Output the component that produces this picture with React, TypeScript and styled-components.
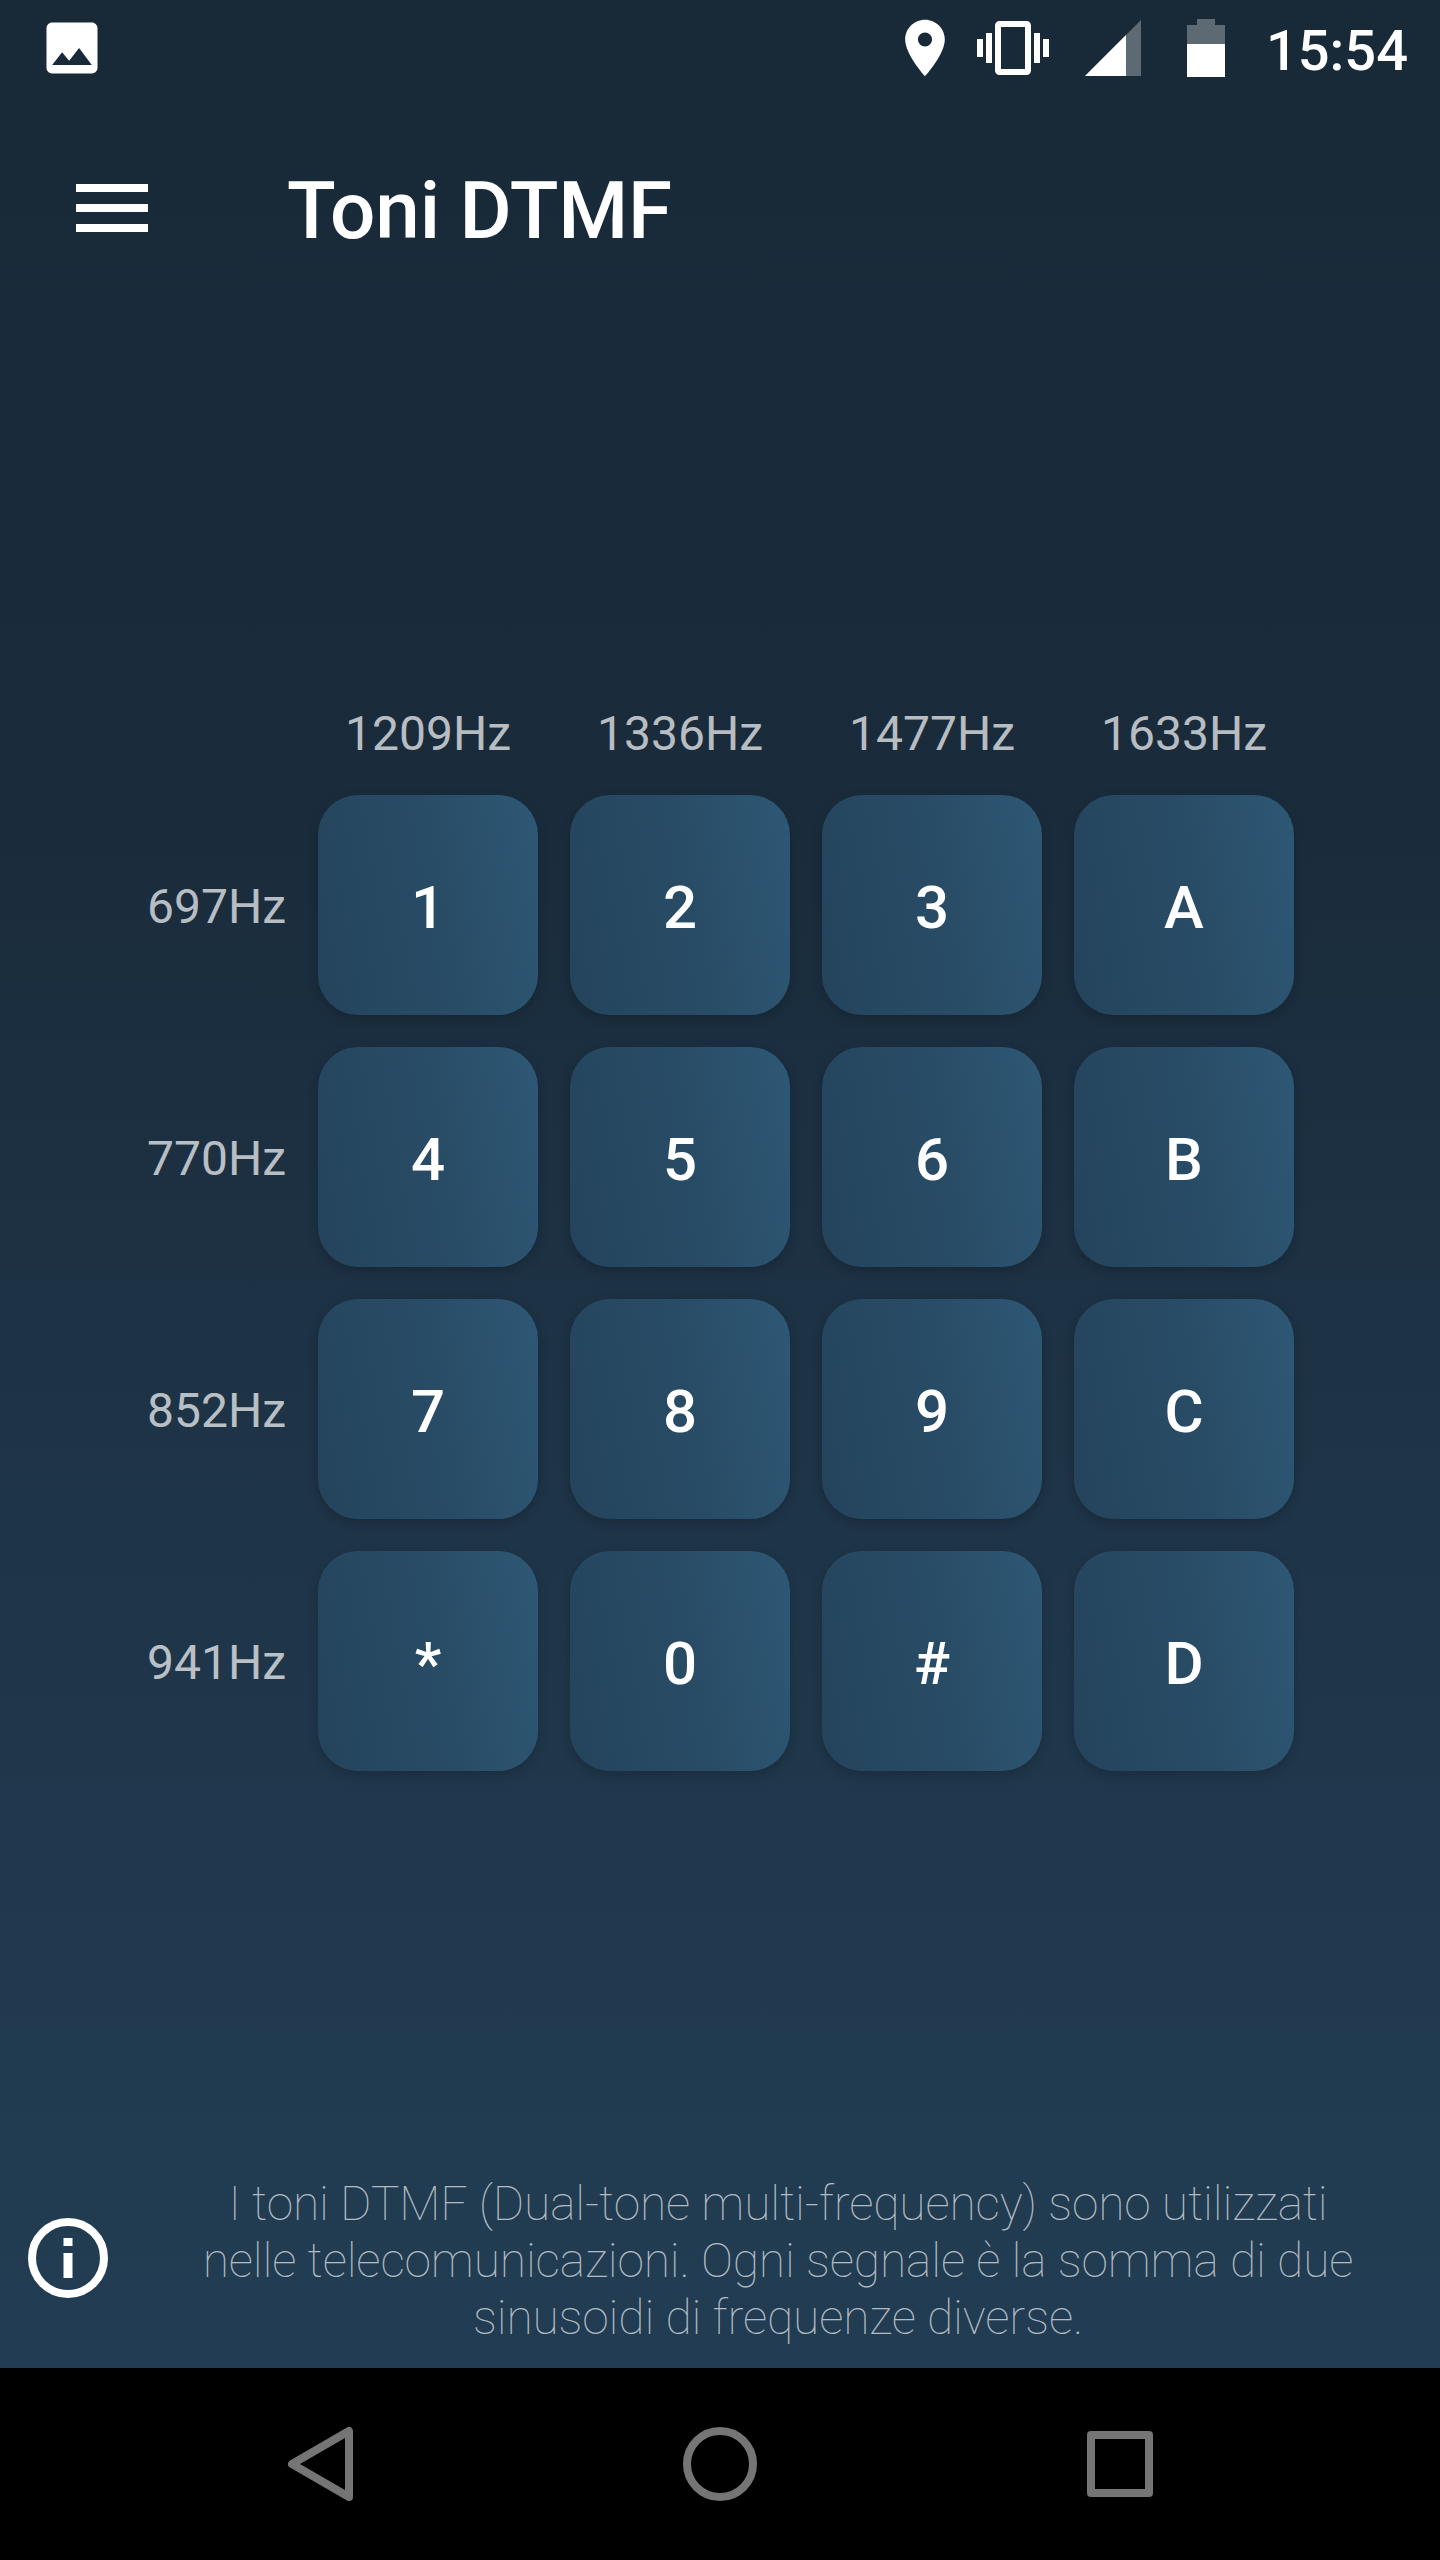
import React from "react";
import styled, { createGlobalStyle } from "styled-components";

const Global = createGlobalStyle`
  html, body { margin: 0; padding: 0; background: #000; }
  * { box-sizing: border-box; }
  body { font-family: Roboto, "Liberation Sans", sans-serif; }
`;

const Screen = styled.div`
  width: 1440px;
  height: 2560px;
  display: flex;
  flex-direction: column;
  overflow: hidden;
`;

const AppArea = styled.div`
  flex: 1;
  display: flex;
  flex-direction: column;
  background: linear-gradient(to bottom, #182a38 0%, #1a2c3c 35%, #1f364a 70%, #223d53 100%);
`;

const StatusBar = styled.div`
  height: 96px;
  display: flex;
  align-items: center;
  padding: 0 32px 0 38px;
  color: #fff;
`;

const StatusIcon = styled.svg<{ $gap?: number }>`
  display: block;
  flex: none;
  margin-left: ${(p) => p.$gap ?? 0}px;
`;

const Spacer = styled.div`
  flex: 1;
`;

const Clock = styled.span`
  margin-left: 41px;
  padding-top: 5px;
  font-size: 56px;
  font-weight: 500;
  line-height: 1;
`;

const Toolbar = styled.header`
  height: 224px;
  display: flex;
  align-items: center;
  padding-left: 76px;
`;

const MenuIcon = styled.svg`
  display: block;
  flex: none;
`;

const Title = styled.h1`
  margin: 6px 0 0 139px;
  font-size: 80px;
  line-height: 94px;
  font-weight: 500;
  letter-spacing: -0.2px;
  color: #fff;
`;

const Main = styled.main`
  flex: 1;
  padding-top: 384px;
`;

const Keypad = styled.div`
  display: grid;
  grid-template-columns: 286px repeat(4, 220px);
  grid-auto-rows: 220px;
  grid-template-rows: 59px;
  column-gap: 32px;
  row-gap: 32px;
`;

const Corner = styled.div``;

const ColLabel = styled.div`
  padding-top: 2px;
  font-size: 48px;
  line-height: 56px;
  font-weight: 400;
  color: rgba(255, 255, 255, 0.7);
  text-align: center;
`;

const RowLabel = styled.div`
  align-self: center;
  padding-top: 4px;
  font-size: 48px;
  line-height: 56px;
  font-weight: 400;
  color: rgba(255, 255, 255, 0.7);
  text-align: right;
`;

const Key = styled.button`
  border: 0;
  padding: 4px 0 0;
  display: flex;
  align-items: center;
  justify-content: center;
  border-radius: 40px;
  background: linear-gradient(80deg, #24445c 0%, #294c66 55%, #2d5875 100%);
  box-shadow: 0 4px 12px rgba(0, 0, 0, 0.2);
  color: #fff;
  font-family: inherit;
  font-size: 60px;
  font-weight: 500;
`;

const Footer = styled.footer`
  display: flex;
  align-items: center;
  padding: 0 0 22px 28px;
`;

const InfoIcon = styled.svg`
  display: block;
  flex: none;
  margin-bottom: 6px;
`;

const FooterText = styled.p`
  width: 1180px;
  margin: 0 0 0 80px;
  font-size: 48px;
  line-height: 57px;
  font-weight: 100;
  letter-spacing: -0.17px;
  text-align: center;
  color: rgba(255, 255, 255, 0.66);
`;

const NavBar = styled.nav`
  height: 192px;
  flex: none;
  background: #000;
  display: grid;
  grid-template-columns: repeat(3, 400px);
  justify-content: center;
  align-items: center;
  justify-items: center;
`;

const NavIcon = styled.svg`
  display: block;
  fill: none;
  stroke: #757575;
  stroke-width: 8px;
  stroke-linejoin: round;
`;

const rows = [
  { hz: "697Hz", keys: ["1", "2", "3", "A"] },
  { hz: "770Hz", keys: ["4", "5", "6", "B"] },
  { hz: "852Hz", keys: ["7", "8", "9", "C"] },
  { hz: "941Hz", keys: ["*", "0", "#", "D"] },
];
const cols = ["1209Hz", "1336Hz", "1477Hz", "1633Hz"];

export default function App() {
  return (
    <Screen>
      <Global />
      <AppArea>
        <StatusBar>
          <StatusIcon width="68" height="68" viewBox="0 0 24 24" fill="#fff">
            <path d="M21 19V5c0-1.1-.9-2-2-2H5c-1.1 0-2 .9-2 2v14c0 1.1.9 2 2 2h14c1.1 0 2-.9 2-2zM8.5 13.5l2.5 3.01L14.5 12l4.5 6H5l3.5-4.5z" />
          </StatusIcon>
          <Spacer />
          <StatusIcon width="68" height="68" viewBox="0 0 24 24" fill="#fff">
            <path d="M12 2C8.13 2 5 5.13 5 9c0 5.25 7 13 7 13s7-7.75 7-13c0-3.87-3.13-7-7-7zm0 9.5a2.5 2.5 0 0 1 0-5 2.5 2.5 0 0 1 0 5z" />
          </StatusIcon>
          <StatusIcon $gap={18} width="72" height="72" viewBox="0 0 24 24" fill="#fff">
            <path d="M0 15h2V9H0v6zm3 2h2V7H3v10zm19-8v6h2V9h-2zm-3 8h2V7h-2v10zM16.5 3h-9C6.67 3 6 3.67 6 4.5v15c0 .83.67 1.5 1.5 1.5h9c.83 0 1.5-.67 1.5-1.5v-15c0-.83-.67-1.5-1.5-1.5zM16 19H8V5h8v14z" />
          </StatusIcon>
          <StatusIcon $gap={36} width="56" height="56" viewBox="0 0 56 56">
            <path d="M0 56 56 0v56z" fill="#fff" fillOpacity="0.3" />
            <path d="M0 56 41 15v41z" fill="#fff" />
          </StatusIcon>
          <StatusIcon $gap={46} width="38" height="58" viewBox="0 0 38 58">
            <path d="M10 0h18v6h10v19H0V6h10z" fill="#fff" fillOpacity="0.3" />
            <path d="M0 25h38v33H0z" fill="#fff" />
          </StatusIcon>
          <Clock>15:54</Clock>
        </StatusBar>
        <Toolbar>
          <MenuIcon width="72" height="48" viewBox="0 0 72 48" fill="#fff">
            <path d="M0 0h72v8H0zM0 20h72v8H0zM0 40h72v8H0z" />
          </MenuIcon>
          <Title>Toni DTMF</Title>
        </Toolbar>
        <Main>
          <Keypad>
            <Corner />
            {cols.map((c) => (
              <ColLabel key={c}>{c}</ColLabel>
            ))}
            {rows.map((r) => (
              <React.Fragment key={r.hz}>
                <RowLabel>{r.hz}</RowLabel>
                {r.keys.map((k) => (
                  <Key key={k}>{k}</Key>
                ))}
              </React.Fragment>
            ))}
          </Keypad>
        </Main>
        <Footer>
          <InfoIcon width="80" height="80" viewBox="0 0 80 80">
            <circle cx="40" cy="40" r="36" fill="none" stroke="#fff" strokeWidth="8" />
            <path d="M35.5 20h9v8h-9zM35.5 35h9v25h-9z" fill="#fff" />
          </InfoIcon>
          <FooterText>
            I toni DTMF (Dual-tone multi-frequency) sono utilizzati nelle telecomunicazioni. Ogni segnale è la somma di due sinusoidi di frequenze diverse.
          </FooterText>
        </Footer>
      </AppArea>
      <NavBar>
        <NavIcon width="80" height="80" viewBox="0 0 80 80">
          <path d="M12 40 69 7v66z" />
        </NavIcon>
        <NavIcon width="80" height="80" viewBox="0 0 80 80">
          <circle cx="40" cy="40" r="33" />
        </NavIcon>
        <NavIcon width="80" height="80" viewBox="0 0 80 80">
          <rect x="11" y="11" width="58" height="58" />
        </NavIcon>
      </NavBar>
    </Screen>
  );
}
